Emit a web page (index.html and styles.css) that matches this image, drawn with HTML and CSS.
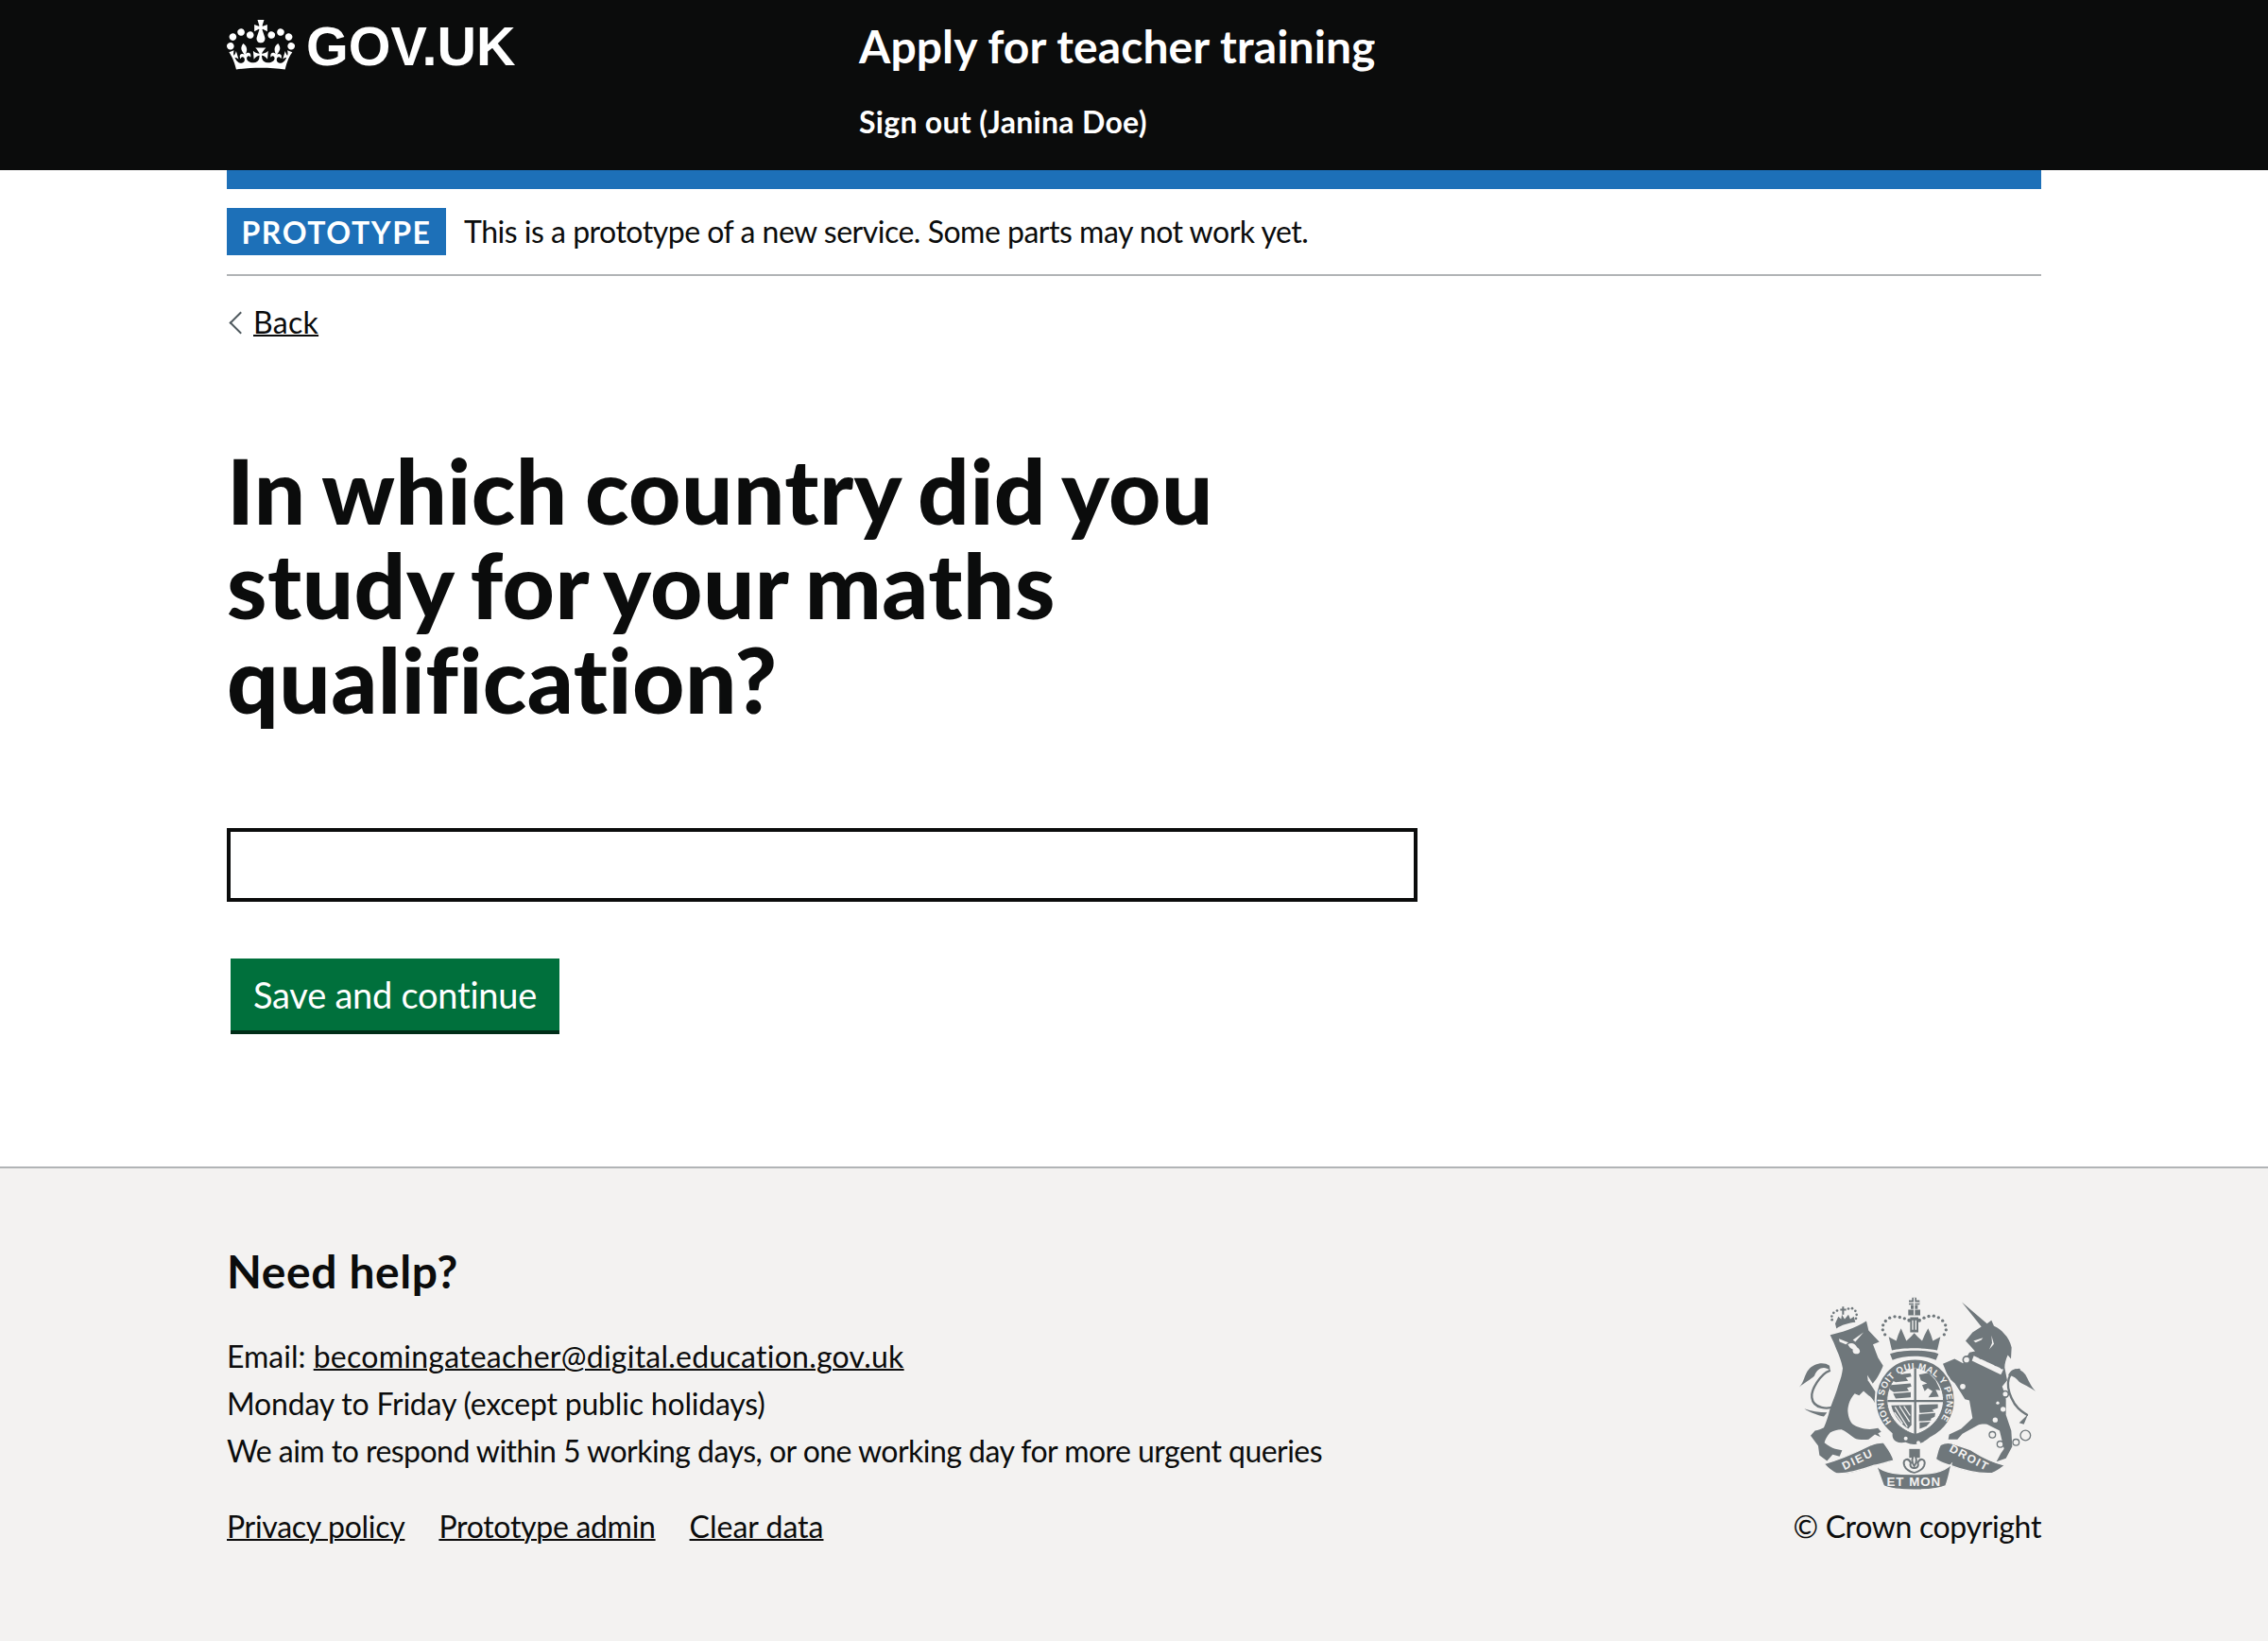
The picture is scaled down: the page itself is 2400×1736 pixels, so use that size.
FILE: index.html
```html
<!DOCTYPE html>
<html lang="en">
<head>
<meta charset="utf-8">
<title>Apply for teacher training</title>
<link rel="stylesheet" href="styles.css">
</head>
<body>
<header class="header">
  <div class="wrap header-inner">
    <a class="logo" href="#">
      <svg class="crown" viewBox="0 0 132 97" aria-hidden="true"><path fill="currentColor" fill-rule="evenodd" d="M25 30.2c3.5 1.5 7.7-.2 9.1-3.7 1.5-3.6-.2-7.8-3.9-9.2-3.6-1.4-7.6.3-9.1 3.9-1.4 3.5.3 7.5 3.9 9zM9 39.5c3.6 1.5 7.8-.2 9.2-3.7 1.5-3.6-.2-7.8-3.9-9.1-3.6-1.5-7.6.2-9.1 3.8-1.4 3.5.3 7.5 3.8 9zM4.4 57.2c3.5 1.5 7.7-.2 9.1-3.8 1.5-3.6-.2-7.7-3.9-9.1-3.5-1.5-7.6.3-9.1 3.8-1.4 3.5.3 7.6 3.9 9.1zm38.3-21.4c3.5 1.5 7.7-.2 9.1-3.8 1.5-3.6-.2-7.7-3.9-9.1-3.6-1.5-7.6.3-9.1 3.8-1.3 3.6.4 7.7 3.9 9.1zm64.4-5.6c-3.6 1.5-7.8-.2-9.1-3.7-1.5-3.6.2-7.8 3.8-9.2 3.6-1.4 7.7.3 9.2 3.9 1.3 3.5-.4 7.5-3.9 9zm15.9 9.3c-3.6 1.5-7.7-.2-9.1-3.7-1.5-3.6.2-7.8 3.7-9.1 3.6-1.5 7.7.2 9.2 3.8 1.5 3.5-.3 7.5-3.8 9zm4.7 17.7c-3.6 1.5-7.8-.2-9.2-3.8-1.5-3.6.2-7.7 3.9-9.1 3.6-1.5 7.7.3 9.2 3.8 1.3 3.5-.4 7.6-3.9 9.1zM89.3 35.8c-3.6 1.5-7.8-.2-9.2-3.8-1.4-3.6.2-7.7 3.9-9.1 3.6-1.5 7.7.3 9.2 3.8 1.4 3.6-.3 7.7-3.9 9.1zM69.7 17.7l8.9 4.7V9.3l-8.9 2.8c-.2-.3-.5-.6-.9-.9L72.4 0H59.6l3.5 11.2c-.3.3-.6.5-.9.9l-8.8-2.8v13.1l8.8-4.7c.3.3.6.7.9.9l-5 15.4v.1c-.2.8-.4 1.6-.4 2.4 0 4.1 3.1 7.5 7 8.1h.2c.3 0 .7.1 1 .1.4 0 .7 0 1-.1h.2c4-.6 7.1-4.1 7.1-8.1 0-.8-.1-1.7-.4-2.4V34l-5.1-15.4c.4-.2.7-.6 1-.9zM66 92.8c16.9 0 32.8 1.1 47.1 3.2 4-16.9 8.9-26.7 14-33.5l-9.6-3.4c1 4.9 1.1 7.2 0 10.2-1.5-1.4-3-4.3-4.2-8.7L108.6 76c2.8-2 5-3.2 7.5-3.3-4.4 9.4-10 11.9-13.6 11.2-4.3-.8-6.3-4.6-5.6-7.9 1-4.7 5.7-5.9 8-.5 4.3-8.7-3-11.4-7.6-8.8 7.1-7.2 7.9-13.5 2.1-21.1-8 6.1-8.1 12.3-4.5 20.8-4.7-5.4-12.1-2.5-9.5 6.2 3.4-5.2 7.9-2 7.2 3.1-.6 4.3-6.4 7.8-13.5 7.2-10.3-.9-10.9-8-11.2-13.8 2.5-.5 7.1 1.8 11 7.3L80.2 60c-4.1 4.4-8 5.3-12.3 5.4 1.4-4.4 8-11.6 8-11.6H55.5s6.4 7.2 7.9 11.6c-4.2-.1-8-1-12.3-5.4l1.4 16.4c3.9-5.5 8.5-7.7 10.9-7.3-.3 5.8-.9 12.8-11.1 13.8-7.2.6-12.9-2.9-13.5-7.2-.7-5 3.8-8.3 7.1-3.1 2.7-8.7-4.6-11.6-9.4-6.2 3.7-8.5 3.6-14.7-4.6-20.8-5.8 7.6-5 13.9 2.2 21.1-4.7-2.6-11.9.1-7.7 8.8 2.3-5.5 7.1-4.2 8.1.5.7 3.3-1.3 7.1-5.7 7.9-3.5.7-9-1.8-13.5-11.2 2.5.1 4.7 1.3 7.5 3.3l-4.7-15.4c-1.2 4.4-2.7 7.2-4.3 8.7-1.1-3-.9-5.3 0-10.2l-9.5 3.4c5 6.9 9.9 16.7 14 33.5 14.8-2.1 30.8-3.2 47.7-3.2z"/></svg>
      <span class="logo-text">GOV.UK</span>
    </a>
    <div class="service">
      <a class="service-name" href="#">Apply for teacher training</a>
      <a class="sign-out" href="#">Sign out (Janina Doe)</a>
    </div>
  </div>
</header>

<div class="wrap">
  <div class="blue-bar"></div>
  <div class="phase">
    <strong class="tag">PROTOTYPE</strong>
    <span class="phase-text">This is a prototype of a new service. Some parts may not work yet.</span>
  </div>
  <a class="back" href="#">Back</a>
  <main class="main">
    <h1 class="title">In which country did you study for your maths qualification?</h1>
    <input class="field" type="text" aria-label="Country">
    <button class="button" type="button">Save and continue</button>
  </main>
</div>

<footer class="footer">
  <div class="wrap footer-inner">
    <div class="footer-left">
      <h2 class="help">Need help?</h2>
      <p class="line">Email: <a class="mail" href="#">becomingateacher@digital.education.gov.uk</a></p>
      <p class="line hours">Monday to Friday (except public holidays)</p>
      <p class="line aim">We aim to respond within 5 working days, or one working day for more urgent queries</p>
      <ul class="links">
        <li><a href="#">Privacy policy</a></li>
        <li><a href="#">Prototype admin</a></li>
        <li class="clear"><a href="#">Clear data</a></li>
      </ul>
    </div>
    <div class="footer-right">
      <svg class="crest" viewBox="60 60 780 620" aria-hidden="true">
        <defs>
          <path id="garterArc" d="M369 466 A100 100 0 1 1 511 466"/>
        </defs>
        <g class="ink">
          <!-- lion crown -->
          <path d="M186 150 L196 128 L205 136 L207 122 L216 136 L228 122 L234 136 L245 128 L250 146 C230 148 205 155 190 166 Z"/>
          <path d="M202 103h6v-7h6v7h7v6h-7v13h-6v-13h-6z"/>
          <g><circle cx="176" cy="138" r="4"/><circle cx="175" cy="127" r="4"/><circle cx="181" cy="116" r="4"/><circle cx="192" cy="109" r="4"/><circle cx="228" cy="103" r="4"/><circle cx="240" cy="102" r="4"/><circle cx="250" cy="110" r="4"/><circle cx="254" cy="122" r="4"/><circle cx="252" cy="134" r="4"/></g>
          <!-- lion -->
          <path d="M170 186 C200 180 250 165 285 142 L292 172 L326 208 L306 216 L322 258 L338 284 C332 300 320 325 304 342 C318 362 338 392 345 418 L322 424 C315 405 305 385 292 378 L276 364 L262 378 L248 372 C236 385 226 405 226 428 C228 450 234 462 242 470 C258 482 290 490 322 482 L332 494 L322 498 L330 510 L312 502 L292 518 C275 520 255 518 248 514 C232 502 218 490 206 486 C192 486 180 490 170 496 C160 508 154 518 152 528 C164 538 175 544 186 548 L208 552 L200 572 L178 566 L160 586 L136 568 C134 558 134 548 132 538 L108 506 L122 490 C132 488 142 484 150 480 C158 462 164 444 168 426 C178 395 190 370 196 346 C204 325 208 310 210 292 C206 270 198 250 190 232 L182 212 Z"/>
          <path class="light" d="M198 198 L228 210 L220 216 L200 208 Z M276 178 L250 208 L242 202 Z"/>
          <path class="light" d="M226 216 C238 208 250 214 256 226 C266 232 268 244 258 246 C248 248 240 244 242 232 C236 230 230 224 226 216 Z"/>
          <path class="light" d="M288 314 L338 392 L332 394 L290 330 Z"/>
          <path class="tail" d="M168 300 C140 310 108 360 112 385 C116 420 165 425 184 410"/>
          <path d="M72 352 C88 336 88 312 102 296 C118 276 150 270 168 284 L170 298 C150 282 128 292 120 316 C108 328 90 336 72 352 Z"/>
          <path d="M88 420 C105 432 130 440 150 445 L160 432 C135 432 110 428 88 420 Z"/>
          <!-- unicorn -->
          <path d="M588 82 L668 150 L682 140 L690 158 C705 165 715 172 722 182 C735 195 742 210 746 226 L744 262 L734 250 C728 262 724 278 724 290 L732 330 L716 350 C722 365 728 380 728 392 L728 440 L745 490 L748 540 L728 578 L698 588 L712 562 L722 548 L708 490 L668 470 C655 468 648 470 640 472 L590 500 L574 518 L545 518 L548 502 L586 484 L622 450 L612 394 L598 390 L584 368 L566 340 L546 322 L528 278 L565 262 L592 276 L612 242 L630 238 L616 222 L600 205 L622 178 L650 160 Z"/>
          <path class="light" d="M625 205 L655 195 L650 202 L632 210 Z M682 188 L690 215 L675 232 L684 212 Z"/>
          <path class="tail" d="M770 296 C735 300 725 340 745 385 C760 420 780 430 795 440"/>
          <path d="M735 315 C745 292 768 285 790 312 C800 330 805 345 822 365 C800 350 785 345 770 335 C758 318 745 315 735 315 Z"/>
          <path d="M770 465 L798 438 L785 470 Z"/>
          <path class="collar" d="M626 252 L720 296 L712 312 L620 268 Z"/>
          <g class="collar-ink"><circle cx="648" cy="258" r="5"/><circle cx="672" cy="268" r="5"/><circle cx="696" cy="280" r="5"/><circle cx="715" cy="290" r="5"/></g>
          <circle class="light-ring" cx="603" cy="265" r="11"/><circle class="light-ring" cx="591" cy="350" r="11"/><circle class="light-ring" cx="726" cy="374" r="10"/>
          <circle class="light" cx="719" cy="422" r="8"/><circle class="light" cx="694" cy="456" r="8"/><circle class="light" cx="702" cy="402" r="5"/>
          <circle class="ring" cx="685" cy="503" r="10"/><circle class="ring" cx="710" cy="533" r="10"/><circle class="ring" cx="760" cy="527" r="10"/><circle class="ring" cx="790" cy="505" r="16"/>
          <!-- big crown -->
          <path d="M430 68h14v16h-14z M420 76h34v14h-34z M426 92h22v12h-22z M418 106h38v18h-38z"/>
          <path class="light" d="M435 68h4v56h-4z M420 82h34v4h-34z"/>
          <path d="M424 130h26v48h-26z"/><path class="light" d="M430 140h4v30h-4zM440 140h4v30h-4z"/>
          <g><circle cx="337" cy="170" r="5"/><circle cx="338" cy="155" r="5"/><circle cx="346" cy="142" r="5"/><circle cx="359" cy="132" r="5"/><circle cx="375" cy="128" r="5"/><circle cx="391" cy="130" r="5"/><circle cx="406" cy="134" r="5"/><circle cx="421" cy="140" r="6"/><circle cx="453" cy="140" r="6"/><circle cx="468" cy="132" r="5"/><circle cx="483" cy="127" r="5"/><circle cx="499" cy="126" r="5"/><circle cx="514" cy="131" r="5"/><circle cx="527" cy="141" r="5"/><circle cx="536" cy="155" r="5"/><circle cx="538" cy="170" r="5"/><circle cx="344" cy="185" r="5"/><circle cx="532" cy="185" r="5"/></g>
          <path d="M356 192 L380 205 L386 186 L395 165 L404 186 L412 205 L426 192 L437 180 L448 192 L462 205 L470 186 L481 165 L490 186 L496 205 L520 192 L510 235 C470 226 400 226 366 235 Z"/>
          <path d="M360 246 C395 232 480 232 514 246 L506 266 C470 250 405 250 368 266 Z"/>
          <!-- garter -->
          <path class="garter" d="M440 262 C515 262 566 325 566 395 C566 445 535 490 490 512 C470 530 440 545 410 530 C385 535 362 525 365 500 C335 475 314 440 314 395 C314 325 365 262 440 262 Z"/>
          <path class="shield" d="M350 395 C350 340 390 296 440 290 C490 296 530 340 530 395 C528 450 485 490 440 502 C395 490 352 450 350 395Z"/>
          <path class="thin" d="M440 292 V515 M352 396 H530"/>
          <g>
            <path d="M370 318 L378 312 L425 308 L428 318 L410 322 L418 332 L378 336 L362 328 Z"/>
            <path d="M362 345 L425 340 L428 350 L414 354 L420 364 L372 368 L358 358 Z"/>
            <path d="M370 372 L426 368 L426 384 L378 388 Z"/>
            <path d="M452 312 L482 306 L505 330 L520 362 L505 360 L515 382 L482 384 L495 365 L480 355 L470 365 L462 345 L478 340 L458 330 Z"/>
            <path d="M452 408 L512 406 L512 418 L494 424 L500 430 L454 434 Z"/>
            <path d="M452 438 L504 434 L502 446 L490 452 L490 458 L452 460 Z"/>
            <path d="M454 464 L488 462 L476 476 L454 484 Z"/>
          </g>
          <path d="M364 410 L428 408 L428 472 L418 484 C395 470 372 445 364 410 Z"/>
          <path class="strings" d="M376 415 L415 478 M390 412 L422 462 M404 412 L424 442 M374 432 L400 468"/>
          <text class="garter-text"><textPath href="#garterArc" startOffset="6">HONI SOIT QUI MAL Y PENSE</textPath></text>
          <circle class="light" cx="410" cy="515" r="6"/><circle class="light" cx="450" cy="528" r="6"/>
          <!-- fleur -->
          <path d="M421 548h34v28h-34z"/>
          <path class="fleur" d="M437 566 C426 580 430 592 437 602 C444 592 448 580 437 566 Z M426 592 C418 574 398 580 406 602 C410 612 424 620 437 624 C450 620 464 612 468 602 C476 580 456 574 448 592 C452 602 446 610 437 608 C428 610 422 602 426 592 Z"/>
          <!-- ribbons -->
          <path class="ribbon" d="M150 595 C190 585 250 560 300 535 C315 530 330 527 340 528 C352 545 368 565 372 585 C345 590 330 598 310 600 C260 618 225 628 190 626 C175 620 160 606 150 595 Z"/>
          <path class="ribbon" d="M520 535 C530 530 545 527 555 530 C580 538 600 545 615 550 C640 565 665 585 725 600 C712 610 700 620 685 625 C640 628 590 615 550 600 C535 595 515 590 505 580 C510 565 512 548 520 535 Z"/>
          <path class="ribbon" d="M316 600 C345 628 390 628 437 628 C480 628 530 625 555 596 C550 620 545 645 537 665 C500 682 375 682 340 665 C332 645 325 622 316 600 Z"/>
          <text class="scroll-text side" text-anchor="middle" transform="rotate(-26 257 580)" x="257" y="593">DIEU</text>
          <text class="scroll-text" text-anchor="middle" x="436" y="665">ET MON</text>
          <text class="scroll-text side" text-anchor="middle" transform="rotate(28 613 575)" x="613" y="588">DROIT</text>
        </g>
      </svg>
      <span class="copyright">© Crown copyright</span>
    </div>
  </div>
</footer>
</body>
</html>
```
FILE: styles.css
```css
* { box-sizing: border-box; }
html, body { margin: 0; padding: 0; }
body {
  font-family: Lato, "Noto Sans", sans-serif;
  font-variant-ligatures: none;
  color: #0b0c0c;
  background: #fff;
  min-height: 1736px;
  display: flex;
  flex-direction: column;
}
a { color: inherit; text-decoration-thickness: 2px; }
.wrap { width: 1920px; margin: 0 auto; }

.header { background: #0b0c0c; height: 180px; color: #fff; }
.header-inner { display: flex; }
.logo { display: flex; align-items: flex-start; width: 669px; text-decoration: none; color: #fff; padding-top: 21px; gap: 12px; }
.crown { width: 72px; height: 53px; display: block; }
.logo-text { font-family: "Liberation Sans", Arial, sans-serif; font-weight: 700; font-size: 57.5px; line-height: 50px; margin-top: 3px; }
.service { display: flex; flex-direction: column; padding-top: 21px; }
.service-name { font-size: 48px; font-weight: 700; line-height: 56px; text-decoration: none; letter-spacing: 0.1px; }
.sign-out { font-size: 32px; font-weight: 700; line-height: 40px; text-decoration: none; margin-top: 32px; letter-spacing: 0.3px; }

.blue-bar { height: 20px; background: #1d70b8; }
.phase { display: flex; align-items: center; gap: 19px; padding: 20px 0; height: 92px; border-bottom: 2px solid #b1b4b6; }
.tag { background: #1d70b8; color: #fff; height: 50px; width: 232px; display: flex; align-items: center; justify-content: center; font-size: 32px; font-weight: 700; letter-spacing: 1.6px; }
.phase-text { font-size: 32px; line-height: 50px; letter-spacing: -0.49px; }
.back { display: inline-block; position: relative; margin-top: 27px; padding-left: 28px; font-size: 32px; line-height: 44px; letter-spacing: 0.3px; }
.back::before { content: ""; position: absolute; left: 6px; top: 14px; width: 15px; height: 15px; border-left: 2px solid #505a5f; border-bottom: 2px solid #505a5f; transform: rotate(45deg); }

.main { display: flex; flex-direction: column; align-items: flex-start; height: 871px; }
.title { margin: 105px 0 0; width: 1200px; font-size: 96px; line-height: 100px; font-weight: 900; letter-spacing: 0.5px; word-spacing: -5px; }
.field { width: 1260px; height: 78px; border: 4px solid #0b0c0c; margin-top: 108px; padding: 0; background: #fff; border-radius: 0; outline: none; }
.button { margin: 60px 0 0 4px; width: 348px; height: 80px; background: #00703c; color: #fff; border: 0; border-radius: 0; box-shadow: inset 0 -4px 0 #002d18; font: 400 38px/50px Lato, "Noto Sans", sans-serif; font-variant-ligatures: none; letter-spacing: -0.25px; padding: 0 0 4px; }

.footer { flex: 1; background: #f3f2f1; border-top: 2px solid #b1b4b6; }
.footer-inner { display: flex; justify-content: space-between; align-items: flex-end; padding-top: 79px; }
.help { margin: 0 0 35px; font-size: 48px; line-height: 60px; font-weight: 700; letter-spacing: 0.6px; }
.line { margin: 0; font-size: 32px; line-height: 50px; }
.mail { letter-spacing: 0.25px; }
.hours { letter-spacing: -0.19px; }
.aim { letter-spacing: -0.53px; }
.links { list-style: none; margin: 30px 0 0; padding: 0; display: flex; gap: 36px; font-size: 32px; line-height: 50px; letter-spacing: -0.3px; }
.clear { letter-spacing: 0; }
.footer-right { display: flex; flex-direction: column; align-items: flex-end; }
.crest { width: 260px; height: 207px; display: block; margin-bottom: 13px; }
.copyright { font-size: 32px; line-height: 50px; letter-spacing: -0.35px; }

.ink { fill: #6f777b; }
.ink .light { fill: #f3f2f1; }
.collar { fill: #f3f2f1; }
.collar-ink { fill: #6f777b; }
.light-ring { fill: #f3f2f1; stroke: #6f777b; stroke-width: 5; }
.ring { fill: none; stroke: #6f777b; stroke-width: 4; }
.tail { fill: none; stroke: #6f777b; stroke-width: 7; stroke-linecap: round; }
.thin { fill: none; stroke: #6f777b; stroke-width: 7; }
.garter { fill: #6f777b; stroke: #f3f2f1; stroke-width: 6; }
.shield { fill: #f3f2f1; stroke: #6f777b; stroke-width: 3; }
.strings { stroke: #f3f2f1; stroke-width: 4; fill: none; }
.ink .fleur { fill: #f3f2f1; stroke: #6f777b; stroke-width: 6; }
.ribbon { fill: #6f777b; stroke: #f3f2f1; stroke-width: 4; }
.garter-text { font-family: "Liberation Sans", Arial, sans-serif; font-weight: 700; font-size: 29px; fill: #f3f2f1; letter-spacing: 1.5px; }
.scroll-text { font-family: "Liberation Sans", Arial, sans-serif; font-weight: 700; font-size: 40px; fill: #f3f2f1; letter-spacing: 3px; }
.scroll-text.side { font-size: 36px; letter-spacing: 5px; }
```
